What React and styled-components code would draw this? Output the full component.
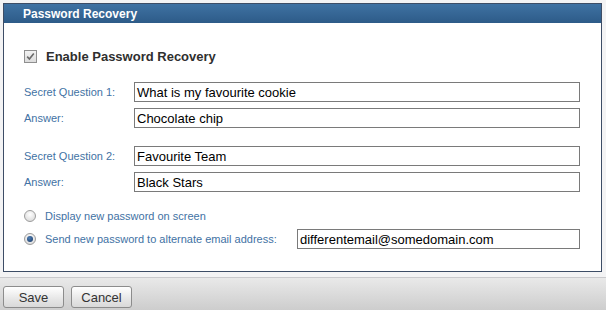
import React from "react";
import styled, { createGlobalStyle } from "styled-components";

const Global = createGlobalStyle`
  html, body { margin: 0; padding: 0; background: #f3f3f4; }
  body { font-family: "Liberation Sans", Arial, sans-serif; width: 606px; height: 310px; overflow: hidden; }
`;

const Page = styled.div`
  width: 606px;
  height: 310px;
  display: flex;
  flex-direction: column;
  padding-top: 3px;
  box-sizing: border-box;
`;

const Panel = styled.section`
  margin: 0 4px 5px 3px;
  border: 1px solid #3d4d66;
  background: #fff;
  display: flex;
  flex-direction: column;
`;

const Header = styled.div`
  height: 19px;
  background: linear-gradient(#3f72a3, #2d5b88);
  color: #fff;
  font-size: 12px;
  font-weight: bold;
  display: flex;
  align-items: center;
  padding-left: 19px;
`;

const Body = styled.div`
  padding: 25px 21px 22px 20px;
  display: flex;
  flex-direction: column;
`;

const CheckRow = styled.label`
  display: flex;
  align-items: center;
  gap: 9px;
  height: 16px;
  font-size: 13px;
  font-weight: bold;
  color: #2f2f2f;
`;

const CheckBox = styled.span`
  width: 11px;
  height: 11px;
  border: 1px solid #8f8f8f;
  background: linear-gradient(#f2f2f2, #dcdcdc);
  display: flex;
  align-items: center;
  justify-content: center;
`;

const Group = styled.div`
  display: flex;
  flex-direction: column;
  gap: 6px;
  margin-top: ${(p) => p.$top}px;
`;

const FieldRow = styled.div`
  display: grid;
  grid-template-columns: 110px 1fr;
  align-items: center;
  height: 20px;
`;

const Label = styled.span`
  font-size: 11px;
  color: #4272a4;
`;

const Input = styled.div`
  height: 20px;
  box-sizing: border-box;
  border: 1px solid #7a7a7a;
  padding: 0 2px;
  font-size: 13px;
  color: #000;
  display: flex;
  align-items: center;
  background: #fff;
`;

const RadioGroup = styled.div`
  display: flex;
  flex-direction: column;
  gap: 3px;
  margin-top: 14px;
`;

const RadioRow = styled.div`
  display: flex;
  align-items: center;
  height: 20px;
`;

const RadioLabel = styled.span`
  display: flex;
  align-items: center;
  gap: 9px;
  font-size: 11px;
  color: #4272a4;
  width: 273px;
  flex: none;
`;

const Radio = styled.span`
  width: 12px;
  height: 12px;
  box-sizing: border-box;
  border-radius: 50%;
  border: 1px solid #9c9c9c;
  background: radial-gradient(circle at 50% 35%, #ffffff, #d4d4d4);
  display: flex;
  align-items: center;
  justify-content: center;
  &::after {
    content: "";
    display: ${(p) => (p.$checked ? "block" : "none")};
    width: 6px;
    height: 6px;
    border-radius: 50%;
    background: radial-gradient(circle at 40% 35%, #4f7fb5, #163561);
  }
`;

const EmailInput = styled(Input)`
  flex: 1;
`;

const Footer = styled.footer`
  flex: 1;
  border-top: 1px solid #c9c9cc;
  background: linear-gradient(#e9e9e9, #cdcdcd);
  display: flex;
  gap: 7px;
  padding: 8px 3px 0;
`;

const Button = styled.button`
  width: 61px;
  height: 22px;
  border: 1px solid #8c8c8c;
  border-radius: 3px;
  background: linear-gradient(#ffffff, #e6e6e6 60%, #d9d9d9);
  font-family: "Liberation Sans", Arial, sans-serif;
  font-size: 13px;
  color: #333;
  padding: 0;
`;

export default function App() {
  return (
    <>
      <Global />
      <Page>
        <Panel>
          <Header>Password Recovery</Header>
          <Body>
            <CheckRow>
              <CheckBox>
                <svg width="9" height="9" viewBox="0 0 9 9">
                  <path d="M1.2 4.6 L3.4 7 L7.8 1.4" fill="none" stroke="#6a6a6a" strokeWidth="1.6" />
                </svg>
              </CheckBox>
              Enable Password Recovery
            </CheckRow>
            <Group $top={18}>
              <FieldRow>
                <Label>Secret Question 1:</Label>
                <Input>What is my favourite cookie</Input>
              </FieldRow>
              <FieldRow>
                <Label>Answer:</Label>
                <Input>Chocolate chip</Input>
              </FieldRow>
            </Group>
            <Group $top={18}>
              <FieldRow>
                <Label>Secret Question 2:</Label>
                <Input>Favourite Team</Input>
              </FieldRow>
              <FieldRow>
                <Label>Answer:</Label>
                <Input>Black Stars</Input>
              </FieldRow>
            </Group>
            <RadioGroup>
              <RadioRow>
                <RadioLabel>
                  <Radio />
                  Display new password on screen
                </RadioLabel>
              </RadioRow>
              <RadioRow>
                <RadioLabel>
                  <Radio $checked />
                  Send new password to alternate email address:
                </RadioLabel>
                <EmailInput>differentemail@somedomain.com</EmailInput>
              </RadioRow>
            </RadioGroup>
          </Body>
        </Panel>
        <Footer>
          <Button>Save</Button>
          <Button>Cancel</Button>
        </Footer>
      </Page>
    </>
  );
}
